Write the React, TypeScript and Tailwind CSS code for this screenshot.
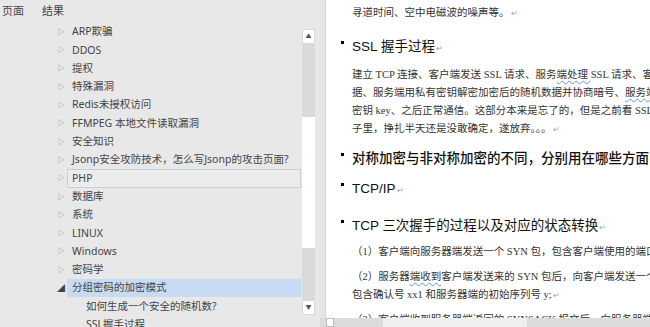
import React from "react";

type Node = { label: string; depth?: number; open?: boolean; leaf?: boolean; selected?: boolean; focused?: boolean };

const nodes: Node[] = [
  { label: "ARP欺骗" },
  { label: "DDOS" },
  { label: "提权" },
  { label: "特殊漏洞" },
  { label: "Redis未授权访问" },
  { label: "FFMPEG 本地文件读取漏洞" },
  { label: "安全知识" },
  { label: "Jsonp安全攻防技术，怎么写Jsonp的攻击页面?" },
  { label: "PHP", focused: true },
  { label: "数据库" },
  { label: "系统" },
  { label: "LINUX" },
  { label: "Windows" },
  { label: "密码学" },
  { label: "分组密码的加密模式", open: true, selected: true },
  { label: "如何生成一个安全的随机数?", depth: 1, leaf: true },
  { label: "SSL握手过程", depth: 1, leaf: true },
];

const uiFont = { fontFamily: '"Noto Sans", "Noto Sans CJK SC", sans-serif' };
const docFont = { fontFamily: '"Liberation Serif", "Noto Sans CJK SC", serif' };
const latin = { fontFamily: '"Liberation Sans", Arial, sans-serif' };

const Mark = () => <span className="ml-[1px] text-[8px] text-[#a0a0a0]">↵</span>;

const Bullet = () => <span className="mt-[4px] mr-[8px] h-[3px] w-[3px] shrink-0 bg-black" />;

const Heading = ({ children, className = "" }: { children: React.ReactNode; className?: string }) => (
  <div className={`flex items-start pl-[15px] text-[13.5px] leading-[20px] text-[#111] ${className}`}>
    <Bullet />
    <span className="whitespace-nowrap">{children}</span>
  </div>
);

const Line = ({ children, className = "" }: { children: React.ReactNode; className?: string }) => (
  <div className={`whitespace-nowrap pl-[26px] text-[10.5px] leading-[18px] text-[#333] ${className}`}>{children}</div>
);

const Squiggle = ({ children }: { children: React.ReactNode }) => (
  <span className="underline decoration-[#6a8fd6] decoration-wavy decoration-1 underline-offset-2">{children}</span>
);

const TreeRow = ({ n }: { n: Node }) => (
  <div className="flex h-[18.3px] items-center pl-[55px]">
    <span className="flex w-[12px] justify-center text-[7px] text-[#8c8c8c]">
      {n.leaf ? "" : n.open ? <span className="text-[8px] text-[#444]">◢</span> : "▷"}
    </span>
    <div
      className={`flex h-full w-[234px] items-center whitespace-nowrap border ${n.depth ? "pl-[18px]" : "pl-[4px]"} ${
        n.selected ? "border-transparent bg-[#c7dbf3]" : n.focused ? "border-[#c3cfdd] bg-[#ececec]" : "border-transparent"
      }`}
    >
      {n.label}
    </div>
  </div>
);

export default function App() {
  return (
    <div className="flex h-[327px] w-[650px] overflow-hidden bg-[#e8e8e8]" style={uiFont}>
      <div className="flex w-[320px] shrink-0 flex-col text-[10.5px] text-[#444]">
        <div className="flex h-[22px] items-center gap-[18px] pl-[2px] text-[11px] text-[#444]">
          <span>页面</span>
          <span>结果</span>
        </div>
        <div className="flex flex-1 overflow-hidden">
          <div className="w-[302px] overflow-hidden pt-[1px]">
            {nodes.map((n) => (
              <TreeRow key={n.label} n={n} />
            ))}
          </div>
          <div className="mt-[7px] mb-[12px] flex w-[13px] flex-col bg-[#dadada]">
            <div className="m-[1px] flex h-[13px] items-center justify-center bg-white text-[6px] text-[#555]">▲</div>
            <div className="mt-[73px] h-[131px] bg-white" />
            <div className="flex-1" />
            <div className="m-[1px] flex h-[13px] items-center justify-center bg-white text-[6px] text-[#555]">▼</div>
          </div>
        </div>
      </div>
      <div className="flex flex-1 flex-col">
        <div className="flex flex-1 overflow-hidden">
          <div className="w-[6px] border-r border-[#d4d4d4] bg-[#e6e6e6]" />
          <div className="flex-1 overflow-hidden bg-white pt-[4px]" style={docFont}>
            <Line>
              寻道时间、空中电磁波的噪声等。
              <Mark />
            </Line>
            <Heading className="mt-[14px]">
              <span style={latin}>SSL</span> 握手过程
              <Mark />
            </Heading>
            <div className="mt-[7px]">
              <Line>
                建立 TCP 连接、客户端发送 SSL 请求、服务<Squiggle>端处理 </Squiggle>SSL 请求、客户端
              </Line>
              <Line>
                据、服务端用私有密钥解密加密后的随机数据并协商暗号、<Squiggle>服务端</Squiggle>
              </Line>
              <Line>密钥 key、之后正常通信。这部分本来是忘了的，但是之前看 SSL 的</Line>
              <Line>
                子里，挣扎半天还是没敢确定，遂放弃。。。
                <Mark />
              </Line>
            </div>
            <Heading className="mt-[10px] font-medium">对称加密与非对称加密的不同，分别用在哪些方面</Heading>
            <Heading className="mt-[10px]">
              <span style={latin}>TCP/IP</span>
              <Mark />
            </Heading>
            <Heading className="mt-[15px]">
              <span style={latin}>TCP</span> 三次握手的过程以及对应的状态转换
              <Mark />
            </Heading>
            <Line className="mt-[5px]">（1）客户端向服务器端发送一个 SYN 包，包含客户端使用的端口</Line>
            <Line className="mt-[7px]">
              （2）服务器<Squiggle>端收到</Squiggle>客户端发送来的 SYN 包后，向客户端发送一个
            </Line>
            <Line>
              包含确认号 xx1 和服务器端的初始序列号 y;
              <Mark />
            </Line>
            <Line className="mt-[6px]">（3）客户端收到服务器端返回的 SYNSACK 报文后，向服务器端</Line>
          </div>
        </div>
        <div className="flex h-[9px] items-stretch bg-[#dcdcdc]">
          <div className="ml-[6px] w-[8px] border border-[#bbb] bg-white" />
          <div className="ml-[49px] w-[144px] bg-[#efefef]" />
        </div>
      </div>
    </div>
  );
}
